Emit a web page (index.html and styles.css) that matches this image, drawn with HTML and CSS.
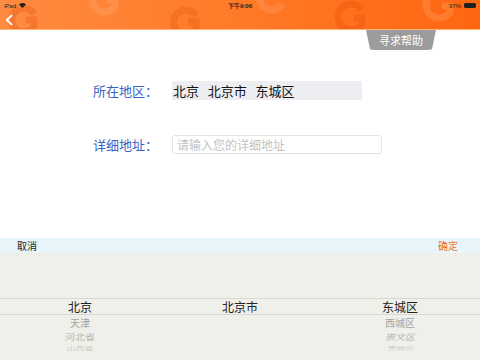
FILE: index.html
```html
<!DOCTYPE html>
<html lang="zh-CN">
<head>
  <meta charset="UTF-8" />
  <title>所在地区</title>
  <link rel="stylesheet" href="styles.css">
</head>
<body>

<header class="topbar">
  <svg class="logos" width="480" height="30" viewBox="0 0 480 30">
    <g fill="none" stroke-width="7">
      <path d="M34 14 A12 12 0 1 0 34 26 L34 20 L26 20" stroke="rgba(230,85,20,0.35)"/>
      <path d="M115 -6 A12 12 0 1 0 115 6 L115 0 L107 0" stroke="rgba(255,255,255,0.1)"/>
      <path d="M196 16 A12 12 0 1 0 196 28 L196 22 L188 22" stroke="rgba(230,85,20,0.35)"/>
      <path d="M282 -8 A12 12 0 1 0 282 4" stroke="rgba(255,255,255,0.1)"/>
      <path d="M362 10 A13 13 0 1 0 362 24 L362 18 L354 18" stroke="rgba(225,80,10,0.35)"/>
      <path d="M450 -2 A13 13 0 1 0 450 12 L450 6 L442 6" stroke="rgba(255,255,255,0.12)"/>
    </g>
  </svg>
  <div class="status">
    <div class="st-left">iPad
      <svg width="7" height="5" viewBox="0 0 10 7"><path d="M5 7 L0 2 Q5 -2 10 2 Z" fill="#222"/></svg>
    </div>
    <div class="st-mid">下午9:06</div>
    <div class="st-right">97%
      <span class="battery"><span class="battery-fill"></span></span>
    </div>
  </div>
  <div class="navrow">
    <svg class="back" width="9" height="12" viewBox="0 0 9 12"><path d="M7 1 L2 6 L7 11" fill="none" stroke="#fff" stroke-width="2"/></svg>
  </div>
</header>

<div class="help-row">
  <div class="help-tab">寻求帮助</div>
</div>

<main class="form">
  <div class="row">
    <label class="label">所在地区：</label>
    <div class="region">北京&nbsp;&nbsp;&nbsp;北京市&nbsp;&nbsp;&nbsp;东城区</div>
  </div>
  <div class="row row-addr">
    <label class="label">详细地址：</label>
    <input class="addr" type="text" placeholder="请输入您的详细地址">
  </div>
</main>

<section class="picker">
  <div class="toolbar">
    <span class="cancel">取消</span>
    <span class="ok">确定</span>
  </div>
  <div class="wheels">
    <div class="sel-band"></div>
    <div class="wheel">
      <div class="item cur">北京</div>
      <div class="item n1">天津</div>
      <div class="item n2">河北省</div>
      <div class="item n3">山西省</div>
    </div>
    <div class="wheel">
      <div class="item cur">北京市</div>
    </div>
    <div class="wheel">
      <div class="item cur">东城区</div>
      <div class="item n1">西城区</div>
      <div class="item n2 slant">崇文区</div>
      <div class="item n3 slant">宣武区</div>
    </div>
  </div>
</section>

</body>
</html>
```

FILE: styles.css
```css
* {
  margin: 0;
  padding: 0;
  box-sizing: border-box;
}

html, body {
  width: 480px;
  height: 360px;
  overflow: hidden;
  background: #fff;
  font-family: "Noto Sans CJK SC", "Liberation Sans", sans-serif;
}

.topbar {
  position: relative;
  height: 30px;
  background: linear-gradient(90deg, #ff8b40, #ff7a28 50%, #ff6610);
  border-bottom: 1px solid #ffb37a;
  overflow: hidden;
}

.logos {
  position: absolute;
  top: 0;
  left: 0;
}

.status {
  position: relative;
  display: flex;
  justify-content: space-between;
  align-items: center;
  height: 11px;
  padding: 0 4px;
  font-family: "Liberation Sans", sans-serif;
  font-size: 6px;
  color: #222;
}

.st-left, .st-right {
  display: flex;
  align-items: center;
  gap: 3px;
  width: 60px;
}

.st-right {
  justify-content: flex-end;
}

.st-mid {
  font-weight: bold;
}

.battery {
  display: inline-block;
  width: 12px;
  height: 5px;
  border: 1px solid #222;
  border-radius: 1px;
}

.battery-fill {
  display: block;
  width: 100%;
  height: 100%;
  background: #222;
}

.navrow {
  position: relative;
  height: 19px;
  display: flex;
  align-items: center;
  padding-left: 5px;
  padding-bottom: 2px;
}

.help-row {
  display: flex;
  justify-content: flex-end;
  padding-right: 44px;
}

.help-tab {
  width: 70px;
  height: 20px;
  background: #9c9c9c;
  color: #fff;
  font-size: 11px;
  line-height: 20px;
  text-align: center;
  clip-path: polygon(0 0, 100% 0, 94% 100%, 6% 100%);
  border-bottom-left-radius: 8px;
  border-bottom-right-radius: 8px;
}

.form {
  padding: 31px 0 0 93px;
}

.row {
  display: flex;
  align-items: center;
  height: 19px;
}

.row-addr {
  margin-top: 35px;
}

.label {
  width: 79px;
  font-size: 13px;
  color: #3a62c4;
}

.region {
  width: 190px;
  height: 19px;
  line-height: 19px;
  padding-left: 1px;
  background: #ededf2;
  font-size: 13px;
  color: #111;
}

.addr {
  width: 210px;
  height: 19px;
  border: 1px solid #e4e4e4;
  border-radius: 3px;
  padding: 0 4px;
  font-family: "Noto Sans CJK SC", sans-serif;
  font-size: 12px;
  color: #333;
  outline: none;
}

.addr::placeholder {
  color: #c2c2c2;
}

.picker {
  margin-top: 84px;
}

.toolbar {
  display: flex;
  justify-content: space-between;
  align-items: center;
  height: 15px;
  padding: 0 22px 0 17px;
  background: #e8f6fc;
  font-size: 10px;
}

.cancel {
  color: #222;
}

.ok {
  color: #f06a28;
}

.wheels {
  position: relative;
  display: grid;
  grid-template-columns: repeat(3, 1fr);
  height: 107px;
  padding-top: 45px;
  background: #f0f0ea;
}

.sel-band {
  position: absolute;
  left: 0;
  right: 0;
  top: 45px;
  height: 17px;
  border-top: 1px solid #d9d9d4;
  border-bottom: 1px solid #d9d9d4;
}

.wheel {
  display: flex;
  flex-direction: column;
  align-items: center;
}

.item {
  font-size: 12px;
  line-height: 17px;
  color: #222;
}

.item.cur {
  height: 17px;
  margin-bottom: 1px;
}

.item.n1 {
  font-size: 10px;
  line-height: 14px;
  color: #a4a4a0;
}

.item.n2 {
  font-size: 10px;
  line-height: 13px;
  color: #b4b4b0;
  transform: scaleY(0.8);
}

.item.n3 {
  font-size: 9px;
  line-height: 11px;
  color: #cacac6;
  transform: scaleY(0.55);
}

.slant {
  font-style: italic;
}
```
